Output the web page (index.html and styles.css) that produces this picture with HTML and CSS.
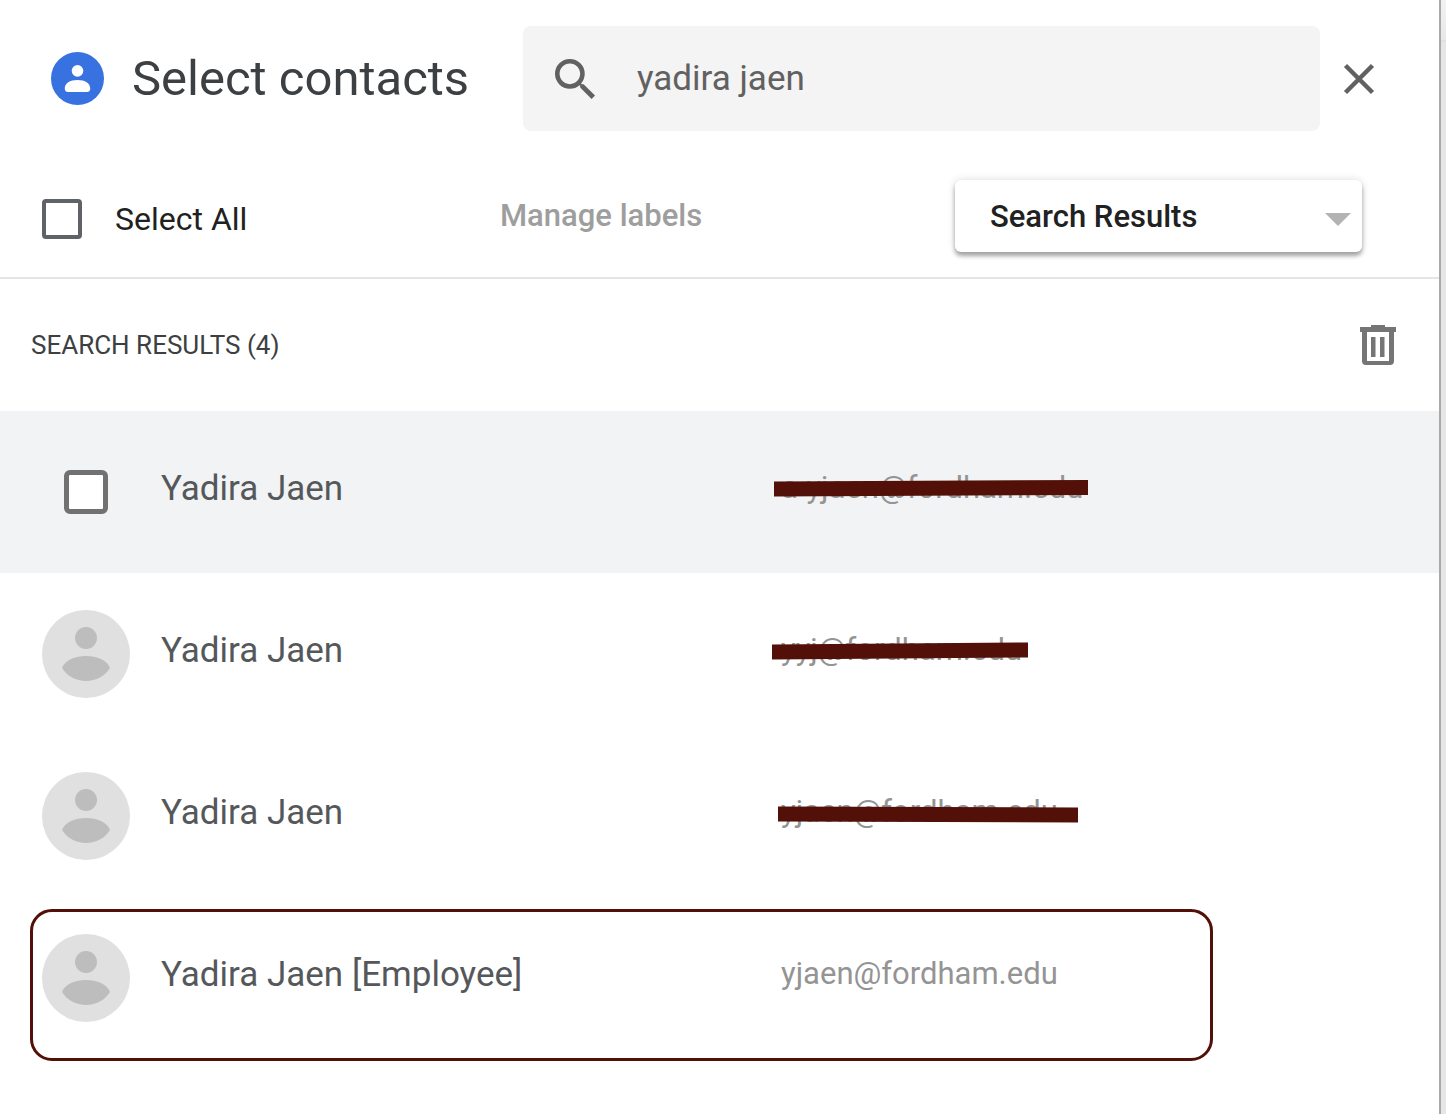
FILE: index.html
```html
<!DOCTYPE html>
<html lang="en">
<head>
<meta charset="utf-8">
<meta name="viewport" content="width=device-width, initial-scale=1">
<title>Select contacts</title>
<link rel="stylesheet" href="styles.css">
</head>
<body>
<svg class="symbols" aria-hidden="true">
  <symbol id="person" viewBox="0 0 88 88">
    <circle cx="44" cy="44" r="44" fill="#e0e0e0"/>
    <circle cx="44" cy="28" r="11" fill="#bdbdbd"/>
    <path d="M20 58C23 50 33 46 44 46s21 4 24 12c-5 8-14 13-24 13s-19-5-24-13z" fill="#bdbdbd"/>
  </symbol>
</svg>
<div class="page">
  <main class="panel">
    <header class="header">
      <svg class="logo" viewBox="0 0 52 52" aria-hidden="true">
        <circle cx="26" cy="26" r="26" fill="#3871e0"/>
        <circle cx="26" cy="18.500" r="5.700" fill="#fff"/>
        <path d="M13.500 36c0-5.500 5-8.500 12.500-8.500s12.500 3 12.500 8.500c0 2-1.300 3.200-3.200 3.200H16.700c-1.900 0-3.200-1.200-3.200-3.200z" fill="#fff"/>
      </svg>
      <h1 class="title">Select contacts</h1>
      <label class="search">
        <svg class="search-icon" viewBox="3 3 17.490 17.490" aria-hidden="true"><path fill="#616161" d="M15.500 14h-.79l-.28-.27A6.471 6.471 0 0 0 16 9.500 6.500 6.500 0 1 0 9.500 16c1.610 0 3.090-.59 4.230-1.570l.27.28v.79l5 4.990L20.490 19l-4.990-5zm-6 0C7.010 14 5 11.990 5 9.500S7.010 5 9.500 5 14 7.010 14 9.500 11.990 14 9.500 14z"/></svg>
        <input class="search-input" type="text" value="yadira jaen" aria-label="Search contacts">
      </label>
      <button class="icon-button" type="button" aria-label="Close">
        <svg class="close-icon" viewBox="0 0 32 32"><path d="M2.500 2.500l27 27M29.500 2.500l-27 27" stroke="#616161" stroke-width="4.500" fill="none"/></svg>
      </button>
    </header>

    <div class="toolbar">
      <label class="select-all"><input class="box" type="checkbox">Select All</label>
      <button class="manage" type="button" disabled>Manage labels</button>
      <div class="dropdown">
        <select class="dropdown-select" aria-label="Contact group"><option>Search Results</option></select>
        <svg class="arrow" viewBox="0 0 26 13" aria-hidden="true"><path d="M0 0h26L13 13z" fill="#b3b3b3"/></svg>
      </div>
    </div>

    <div class="results-head">
      <h2 class="results-title">SEARCH RESULTS (4)</h2>
      <button class="icon-button" type="button" aria-label="Delete">
        <svg class="trash-icon" viewBox="0 0 36 40"><path fill="#757575" fill-rule="evenodd" d="M11 0h14v2h11v5h-2v29q0 4-4 4H6q-4 0-4-4V7H0V2h11zM7 7v29h22V7z"/><path fill="#757575" d="M11 12h4.500v20H11zM20 12h4.500v20H20z"/></svg>
      </button>
    </div>

    <ul class="contacts">
      <li class="contact contact-active">
        <input class="box box-large" id="c1" type="checkbox">
        <label class="name" for="c1">Yadira Jaen</label>
        <span class="email">a-yjaen@fordham.edu
          <svg class="strike" viewBox="0 0 330 20" aria-hidden="true"><path d="M5 3.500L319 2v15L5 18.500z"/></svg>
        </span>
      </li>
      <li class="contact">
        <svg class="avatar" aria-hidden="true"><use href="#person"/></svg>
        <span class="name">Yadira Jaen</span>
        <span class="email">yyj@fordham.edu
          <svg class="strike" viewBox="0 0 330 20" aria-hidden="true"><path d="M3 4.500L259 2.500v15L3 19.500z"/></svg>
        </span>
      </li>
      <li class="contact">
        <svg class="avatar" aria-hidden="true"><use href="#person"/></svg>
        <span class="name">Yadira Jaen</span>
        <span class="email">yjaen@fordham.edu
          <svg class="strike" viewBox="0 0 330 20" aria-hidden="true"><path d="M9 4.500L309 5.500v15L9 19.500z"/></svg>
        </span>
      </li>
      <li class="contact contact-marked">
        <svg class="avatar" aria-hidden="true"><use href="#person"/></svg>
        <span class="name">Yadira Jaen [Employee]</span>
        <span class="email">yjaen@fordham.edu</span>
      </li>
    </ul>
  </main>
  <div class="backdrop"></div>
</div>
</body>
</html>
```
FILE: styles.css
```css
* { box-sizing: border-box; }

body {
  margin: 0;
  background: #fff;
  font-family: Roboto, "Liberation Sans", sans-serif;
  color: #212121;
}

h1, h2, ul { margin: 0; padding: 0; font-weight: 400; }
button, input, select { font: inherit; color: inherit; }
svg { display: block; flex: none; overflow: visible; }
.symbols { position: absolute; width: 0; height: 0; }

.page { display: flex; min-height: 100vh; }
.panel { flex: 1; min-width: 0; border-right: 2px solid #a9a9a9; }

.backdrop {
  width: 5px;
  background: linear-gradient(#f2f2f2, #e8e8e8 40px, #e0e0e0 40px, #e0e0e0 42px, #e6e6e6 42px);
}

/* Header */
.header {
  display: flex;
  align-items: center;
  padding: 26px 64px 26px 51px;
}
.logo { width: 53px; height: 53px; }
.title {
  width: 391px;
  margin-left: 28px;
  font-size: 49px;
  line-height: 56px;
  color: #3c4043;
  white-space: nowrap;
}
.search {
  flex: 1;
  display: flex;
  align-items: center;
  gap: 42px;
  min-width: 0;
  height: 105px;
  padding: 0 32px;
  border-radius: 8px;
  background: #f4f4f4;
}
.search-icon { width: 40px; height: 40px; }
.search-input {
  flex: 1;
  min-width: 0;
  padding: 0;
  border: 0;
  outline: 0;
  background: none;
  font-size: 35px;
  line-height: 44px;
  color: #616161;
}
.icon-button { padding: 0; border: 0; background: none; }
.close-icon { width: 32px; height: 32px; margin-left: 23px; }

/* Toolbar */
.toolbar {
  display: flex;
  align-items: flex-start;
  height: 122px;
  padding: 23px 77px 0 42px;
  border-bottom: 2px solid #e5e5e5;
}
.box {
  appearance: none;
  flex: none;
  width: 40px;
  height: 40px;
  margin: 0;
  border: 4px solid #5f6368;
  border-radius: 4px;
  background: #fff;
}
.select-all {
  display: flex;
  align-items: center;
  gap: 33px;
  width: 458px;
  padding-top: 19px;
  font-size: 32px;
  line-height: 40px;
}
.manage {
  padding: 16px 0 0;
  border: 0;
  background: none;
  font-size: 31px;
  font-weight: 500;
  line-height: 40px;
  color: #9e9e9e;
}
.dropdown { position: relative; width: 407px; margin-left: auto; }
.dropdown-select {
  appearance: none;
  display: block;
  width: 100%;
  height: 72px;
  padding: 0 35px;
  border: 0;
  border-radius: 6px;
  background: #fff;
  box-shadow: 0 4px 4px rgba(0, 0, 0, .32), 0 0 8px rgba(0, 0, 0, .14);
  font-size: 31px;
  font-weight: 500;
}
.arrow { position: absolute; right: 11px; top: 33px; width: 26px; height: 13px; }

/* Results */
.results-head {
  display: flex;
  align-items: center;
  justify-content: space-between;
  height: 132px;
  padding: 0 43px 0 31px;
}
.results-title { font-size: 26px; line-height: 32px; color: #3c4043; }
.trash-icon { width: 36px; height: 40px; }

.contacts { list-style: none; }
.contact {
  position: relative;
  display: grid;
  grid-template-columns: 88px 589px 1fr;
  column-gap: 31px;
  align-items: center;
  height: 162px;
  padding: 0 42px;
}
.contact-active { background: #f1f3f4; }
.box-large {
  justify-self: center;
  width: 44px;
  height: 44px;
  border-width: 5px;
  border-color: #717171;
  border-radius: 6px;
}
.avatar { width: 88px; height: 88px; }
.name { padding-bottom: 6px; font-size: 35px; line-height: 44px; color: #55585b; }
.email {
  position: relative;
  padding-bottom: 8px;
  font-size: 31px;
  line-height: 40px;
  color: #949494;
}
.strike {
  position: absolute;
  left: -12px;
  top: 10px;
  width: 330px;
  height: 20px;
  fill: #521008;
}
.contact-marked::after {
  content: "";
  position: absolute;
  inset: 12px 226px -2px 30px;
  border: 3px solid #521008;
  border-radius: 22px;
}
```
